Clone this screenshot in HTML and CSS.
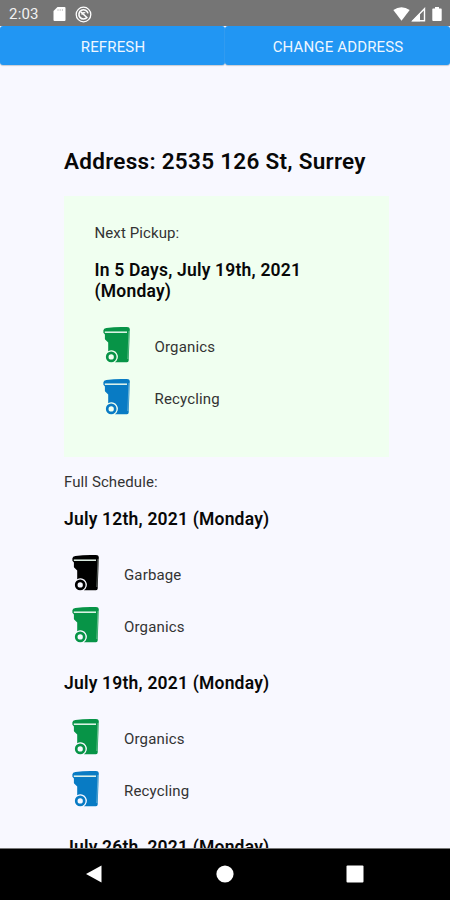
FILE: index.html
```html
<!DOCTYPE html>
<html lang="en">
<head>
<meta charset="utf-8">
<title>Pickup schedule</title>
<link rel="stylesheet" href="styles.css">
</head>
<body>
<svg class="defs" width="0" height="0">
  <symbol id="bin" viewBox="0 0 30 38">
    <path d="M1.4 4.2Q1.6 2.6 4.4 2.1Q14 .6 25 1.1Q27.7 1.3 27.8 3L26.7 34.4Q26.6 36.2 25 36.2H12.8A6.4 6.4 0 0 0 6.2 25.2V16.4L2.9 13.3V8.4L1.4 6.7Z" fill="currentColor"/>
    <path class="lid" d="M2.8 6.2H25"/>
    <path class="edge" d="M27 5L25.8 33"/>
    <circle class="wheel" cx="9.2" cy="30.9" r="4"/>
  </symbol>
</svg>
<div class="phone">
  <header class="status">
    <span class="time">2:03</span>
    <svg class="sd" viewBox="0 0 13 16"><path d="M4.5 1H11.5Q12.5 1 12.5 2V14Q12.5 15 11.5 15H1.5Q.5 15 .5 14V5Z" fill="#fff"/><path d="M5 3V5M7.2 3V5M9.4 3V5" stroke="#bbb" stroke-width=".8"/></svg>
    <svg class="sync" viewBox="0 0 17 17" fill="none" stroke="#fff"><circle cx="8.5" cy="8.5" r="7.3" stroke-width="1.3"/><path d="M12.2 11.2A4.6 4.6 0 1 1 13 7.4M6 6L12.4 12" stroke-width="1.6"/><path d="M7 8.8A2 2 0 0 1 10.2 7" stroke-width="1.3"/></svg>
    <span class="spacer"></span>
    <svg class="wifi" viewBox="0 0 17 14"><path d="M.3 3Q8.5-2.4 16.7 3L8.5 13.7Z" fill="#fff"/></svg>
    <svg class="cell" viewBox="0 0 15 15"><path d="M1.8 13.8H13.5V1.8Z" fill="none" stroke="#fff" stroke-width="1.4"/><path d="M1 14.3L9 6V14.3Z" fill="#fff"/></svg>
    <svg class="battery" viewBox="0 0 10 16"><path d="M3 1H7V2.4H9Q9.7 2.4 9.7 3.3V14Q9.7 15 8.8 15H1.2Q.3 15 .3 14V3.3Q.3 2.4 1 2.4H3Z" fill="#fff"/></svg>
  </header>
  <nav class="actions">
    <button>REFRESH</button>
    <button>CHANGE ADDRESS</button>
  </nav>
  <main class="content">
    <h1>Address: 2535 126 St, Surrey</h1>
    <section class="card">
      <p>Next Pickup:</p>
      <h2>In 5 Days, July 19th, 2021 (Monday)</h2>
      <ul>
        <li><svg class="bin green"><use href="#bin"/></svg><span>Organics</span></li>
        <li><svg class="bin blue"><use href="#bin"/></svg><span>Recycling</span></li>
      </ul>
    </section>
    <section class="schedule">
      <p>Full Schedule:</p>
      <h2>July 12th, 2021 (Monday)</h2>
      <ul>
        <li><svg class="bin black"><use href="#bin"/></svg><span>Garbage</span></li>
        <li><svg class="bin green"><use href="#bin"/></svg><span>Organics</span></li>
      </ul>
      <h2>July 19th, 2021 (Monday)</h2>
      <ul>
        <li><svg class="bin green"><use href="#bin"/></svg><span>Organics</span></li>
        <li><svg class="bin blue"><use href="#bin"/></svg><span>Recycling</span></li>
      </ul>
      <h2>July 26th, 2021 (Monday)</h2>
    </section>
  </main>
  <footer class="navbar">
    <svg viewBox="0 0 20 20"><path d="M2 10L17.5 1.5V18.5Z"/></svg>
    <svg viewBox="0 0 20 20"><circle cx="10" cy="10" r="8.6"/></svg>
    <svg viewBox="0 0 20 20"><rect x="1.5" y="1.5" width="17" height="17" rx="1"/></svg>
  </footer>
</div>
</body>
</html>
```
FILE: styles.css
```css
* { box-sizing: border-box; }
body { margin: 0; font-family: Roboto, sans-serif; color: #080808; }
.defs { display: block; }
.phone { height: 900px; display: flex; flex-direction: column; background: #f8f8ff; overflow: hidden; }
.status { height: 26px; flex: none; background: #757575; display: flex; align-items: center; padding: 2px 8px 0 9px; }
.time { color: #f2f2f2; font-size: 15px; width: 44px; letter-spacing: .2px; }
.sd { width: 13px; height: 16px; margin-right: 9px; }
.sync { width: 17px; height: 17px; }
.spacer { flex: 1; }
.wifi { width: 17px; height: 14px; margin-right: 1px; }
.cell { width: 15px; height: 15px; margin-right: 6px; }
.battery { width: 10px; height: 16px; }
.actions { flex: none; height: 39px; display: flex; background: #f8f8ff; }
.actions button { flex: 1 1 0; border: 0; border-radius: 3px; background: #2196f3; box-shadow: 0 1px 1px #c8cbd3; color: #eef6ff; font: 400 15px Roboto, sans-serif; letter-spacing: .15px; padding: 2px 0 0 1px; }
.content { flex: 1; min-height: 0; overflow: hidden; padding: 81px 61px 0 64px; }
h1 { margin: 0 0 20px; font-size: 22.5px; line-height: 30px; font-weight: 600; letter-spacing: .28px; white-space: nowrap; }
.card { width: 325px; height: 261px; background: #f0fff0; padding: 27px 31px 0 30.5px; }
p { margin: 0; font-size: 15px; line-height: 20px; color: #333; letter-spacing: .1px; }
h2 { margin: 16.5px 0 0; font-size: 17.5px; line-height: 21px; font-weight: 600; letter-spacing: .2px; }
ul { list-style: none; margin: 19px 0 0; padding: 0; }
ul + h2 { margin-top: 19px; }
li { height: 52.5px; display: flex; align-items: center; font-size: 15px; color: #333; letter-spacing: .15px; }
.bin { width: 30px; height: 38px; margin: -4px 23px 0 7px; }
.green { color: #079447; }
.blue { color: #087bc4; }
.black { color: #000; }
.lid, .edge { fill: none; stroke: #e6f7ec; }
.lid { stroke-width: 1.5; }
.edge { stroke-width: .4; }
.wheel { fill: none; stroke: currentColor; stroke-width: 2.7; }
.schedule { padding-top: 15px; }
.navbar { flex: none; height: 52px; background: #000; border-top: 1px solid #777; display: flex; justify-content: space-between; align-items: center; padding: 0 85px 2px 84px; }
.navbar svg { width: 20px; height: 20px; fill: #fff; }
```
